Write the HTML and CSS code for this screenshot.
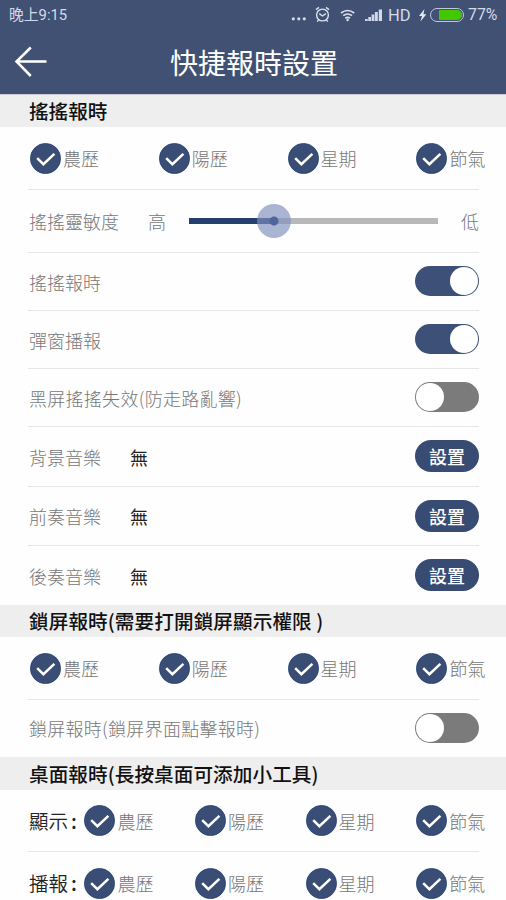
FILE: index.html
```html
<!DOCTYPE html>
<html lang="zh-Hant">
<head>
<meta charset="utf-8">
<title>快捷報時設置</title>
<link rel="stylesheet" href="styles.css">
</head>
<body>
<svg class="defs" width="0" height="0">
  <symbol id="check" viewBox="0 0 31 31">
    <circle cx="15.5" cy="15.5" r="15.1" fill="#3a4d75" stroke="#23427a" stroke-width=".8"/>
    <path d="M7.200 15.200l6.200 6 11-10.400" fill="none" stroke="#fff" stroke-width="2.500"/>
  </symbol>
</svg>
<header class="top">
  <div class="status">
    <span class="clock">晚上9:15</span>
    <svg class="tray" width="139" height="20" viewBox="291 5 139 20">
      <g fill="#d5daea"><circle cx="293.300" cy="18.800" r="1.600"/><circle cx="298.800" cy="18.800" r="1.600"/><circle cx="304.300" cy="18.800" r="1.600"/></g>
      <g fill="none" stroke="#dde1ef" stroke-width="1.400"><circle cx="322.500" cy="15" r="5.900"/><path d="M319.300 13.600l3.200 2.400 3.400-2.400M316 9.600l3-2.200M329 9.600l-3-2.200M318.600 20l-1.400 1.600M326.400 20l1.400 1.600"/></g>
      <g fill="none" stroke="#dde1ef" stroke-width="1.700"><path d="M341 13q6.600-5 13.200 0M343.200 15.700q4.400-3.400 8.800 0M345.300 18.200q2.300-1.700 4.600 0"/></g>
      <circle cx="347.600" cy="20" r="1.200" fill="#dde1ef"/>
      <path d="M365 21v-2h2.700v2zM368.300 21v-4h2.700v4zM371.600 21v-6.500h2.700V21zM374.900 21v-9h2.900v9zM378.800 21V9.400h3.200V21z" fill="#d5daea"/>
      <text x="388" y="21" class="hd">HD</text>
      <path d="M424.500 9l-5.500 7h3l-1.600 5.500 6-7.200h-3z" fill="#e6e9f4"/>
    </svg>
    <span class="battery"><i></i></span>
    <span class="percent">77%</span>
  </div>
  <div class="titlebar">
    <svg class="back" width="34" height="32" viewBox="0 0 34 32"><path d="M32.500 15.500H2.500M16.800 1.500L2.500 15.500l14.300 14.500" fill="none" stroke="#fff" stroke-width="2.500"/></svg>
    <h1>快捷報時設置</h1>
  </div>
</header>
<main>
  <h2>搖搖報時</h2>
  <div class="row checks tall">
    <label><svg><use href="#check"/></svg>農歷</label><label><svg><use href="#check"/></svg>陽歷</label><label><svg><use href="#check"/></svg>星期</label><label><svg><use href="#check"/></svg>節氣</label>
  </div>
  <div class="row tall">
    <span>搖搖靈敏度</span><span class="high">高</span>
    <div class="slider"><div class="fill"></div><div class="thumb"></div></div>
    <span class="low">低</span>
  </div>
  <div class="row"><span>搖搖報時</span><div class="switch on"></div></div>
  <div class="row"><span>彈窗播報</span><div class="switch on"></div></div>
  <div class="row"><span class="wide">黑屏搖搖失效(防走路亂響)</span><div class="switch"></div></div>
  <div class="row music first"><span>背景音樂</span><b>無</b><button>設置</button></div>
  <div class="row music"><span>前奏音樂</span><b>無</b><button>設置</button></div>
  <div class="row music last"><span>後奏音樂</span><b>無</b><button>設置</button></div>
  <h2 class="lockhead">鎖屏報時(需要打開鎖屏顯示權限 )</h2>
  <div class="row checks tall">
    <label><svg><use href="#check"/></svg>農歷</label><label><svg><use href="#check"/></svg>陽歷</label><label><svg><use href="#check"/></svg>星期</label><label><svg><use href="#check"/></svg>節氣</label>
  </div>
  <div class="row lock last"><span class="wide">鎖屏報時(鎖屏界面點擊報時)</span><div class="switch"></div></div>
  <h2 class="desktop">桌面報時(長按桌面可添加小工具)</h2>
  <div class="row checks tall named">
    <em>顯示<i>:</i></em><label><svg><use href="#check"/></svg>農歷</label><label><svg><use href="#check"/></svg>陽歷</label><label><svg><use href="#check"/></svg>星期</label><label><svg><use href="#check"/></svg>節氣</label>
  </div>
  <div class="row checks tall named last">
    <em>播報<i>:</i></em><label><svg><use href="#check"/></svg>農歷</label><label><svg><use href="#check"/></svg>陽歷</label><label><svg><use href="#check"/></svg>星期</label><label><svg><use href="#check"/></svg>節氣</label>
  </div>
</main>
</body>
</html>
```
FILE: styles.css
```css
* { box-sizing: border-box; }
body {
  margin: 0;
  height: 900px;
  overflow: hidden;
  background: #fefefe;
  font-family: "Noto Sans CJK TC", "Noto Sans", sans-serif;
  font-size: 18px;
  font-weight: 300;
  line-height: 1;
  color: #777;
}
.defs { display: block; height: 0; }
.top {
  height: 95px;
  background: #405173;
  border-bottom: 1px solid #c8cad6;
  color: #fff;
}
.status {
  display: flex;
  align-items: center;
  height: 30px;
  padding-left: 9px;
  color: #d5daea;
  font: 400 14px/1 Roboto, "Noto Sans CJK TC", sans-serif;
}
.clock { width: 282px; font-size: 14.8px; }
.tray { flex: none; }
.hd { font: 400 16.5px Roboto, sans-serif; fill: #d5daea; }
.battery {
  width: 34px;
  height: 14px;
  padding: 1px 1px 1px 8px;
  border: 1.5px solid #bfc7dc;
  border-radius: 7px;
}
.battery i { display: block; height: 10px; border-radius: 1px 5px 5px 1px; background: #43c800; }
.percent { margin-left: 4px; font-size: 15.8px; }
.titlebar { display: flex; align-items: center; height: 64px; padding-left: 14px; }
.back { flex: none; width: 34px; }
h1 { margin: 0 0 0 122px; font-size: 28px; font-weight: 400; line-height: 1; }
h2 {
  display: flex;
  align-items: center;
  height: 32px;
  margin: 0;
  padding: 0 0 0 29px;
  background: #eee;
  color: #111;
  font-size: 19.6px;
  font-weight: 500;
  line-height: 1;
  white-space: pre;
}
h2.desktop { height: 33px; margin-top: 1px; letter-spacing: .08px; }
h2.lockhead { letter-spacing: .1px; }
.row {
  display: flex;
  align-items: center;
  height: 58px;
  margin: 0 27px 0 28px;
  padding-left: 1px;
  border-bottom: 1px solid #e6e6e6;
  white-space: nowrap;
}
.tall { height: 63px; }
.music { height: 59px; }
.first { height: 60px; }
.last { border-bottom: 0; }
.lock { height: 56px; }
.wide { letter-spacing: .28px; }
.checks { display: grid; grid-template-columns: repeat(3, 128.8px) 1fr; padding-left: 2px; }
.checks label { display: flex; align-items: center; gap: 2px; min-width: 0; }
.checks svg { flex: none; width: 31px; height: 31px; }
.named { grid-template-columns: 54.4px repeat(3, 110.6px) 1fr; height: 62px; }
.named em { display: flex; font-style: normal; font-size: 19.5px; color: #222; margin-left: -1px; font-weight: 350; }
.named em i { font-style: normal; margin-left: 3px; font-weight: 500; }
.high { margin-left: 29px; }
.low { margin-left: 23px; }
.slider { position: relative; width: 249px; height: 6px; margin: -1px 0 0 23px; background: #b8b8b8; }
.fill { width: 85px; height: 6px; background: #243e70; }
.thumb {
  position: absolute;
  left: 68px;
  top: -14px;
  width: 34px;
  height: 34px;
  border-radius: 50%;
  background: radial-gradient(circle, #4e659b 0 4px, transparent 5px), rgba(128, 145, 190, .67);
}
.switch {
  display: flex;
  width: 64px;
  height: 30px;
  margin: -1px 0 0 auto;
  padding: 1px;
  border-radius: 15px;
  background: #7b7b7b;
}
.switch::before { content: ""; width: 28px; height: 28px; border-radius: 50%; background: #fff; }
.switch.on { justify-content: flex-end; background: #3d5078; }
.music b { margin-left: 29px; color: #222; font-weight: 400; }
button {
  width: 64px;
  height: 32px;
  margin: -1px 0 0 auto;
  padding: 0;
  border: 0;
  border-radius: 16px;
  background: #374b73;
  color: #fff;
  font: 500 18px/1 "Noto Sans CJK TC", sans-serif;
}
```
